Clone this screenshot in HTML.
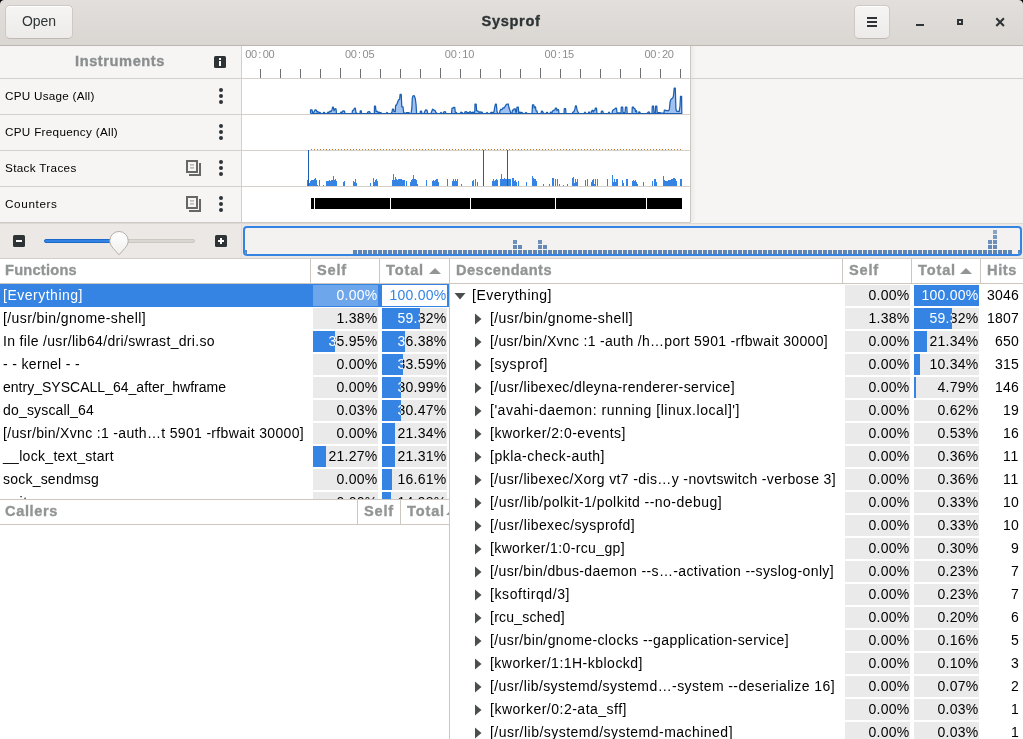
<!DOCTYPE html>
<html><head><meta charset="utf-8"><title>Sysprof</title>
<style>
*{box-sizing:border-box;margin:0;padding:0}
html,body{width:1023px;height:739px;overflow:hidden;background:#f6f5f4}
body{position:relative;font-family:'Liberation Sans', sans-serif;font-size:14px;color:#000;will-change:transform}
.abs{position:absolute}
.t{white-space:pre;display:inline-block}
#hb{left:0;top:0;width:1023px;height:46px;background:linear-gradient(#e2dfdc,#dad6d2);border-bottom:1px solid #bdb6af}
.btn{position:absolute;border:1px solid #cec9c4;border-bottom-color:#c0b9b3;border-radius:5px;background:linear-gradient(#f6f5f4,#edebe9);box-shadow:inset 0 1px #fff}
.lbl{position:absolute;white-space:pre;line-height:20px;height:20px;color:#000}
.b{font-weight:bold}
.row{font-size:11.7px}
.title,.inst,.hdr{font-size:14.6px;-webkit-text-stroke:0.35px currentColor}
.hdr{color:#929595;font-weight:bold}
.num{text-align:right}
.trough{position:absolute;background:#e9eae9;height:21px}
.fill{position:absolute;background:#3584e4;height:21px}
.vline{position:absolute;width:1px;background:#cdc7c2}
.hline{position:absolute;height:1px;background:#cdc7c2}
.clip{position:absolute;overflow:hidden;white-space:pre}
</style></head><body>

<div id="hb" class="abs"></div>
<div class="abs" style="left:0;top:0;width:4px;height:4px;background:radial-gradient(circle at 4px 4px,rgba(0,0,0,0) 3.4px,#000 4.4px)"></div>
<div class="abs" style="left:1019px;top:0;width:4px;height:4px;background:radial-gradient(circle at 0px 4px,rgba(0,0,0,0) 3.4px,#000 4.4px)"></div>
<div class="btn" style="left:5px;top:5px;width:68px;height:34px"></div>
<div class="lbl" style="left:6px;top:11px;width:66px;text-align:center;color:#2e3436"><span class="t open" style="letter-spacing:-0.062px">Open</span></div>
<div class="lbl b" style="left:411px;top:11px;width:200px;text-align:center;color:#2e3436"><span class="t title" style="letter-spacing:0.665px">Sysprof</span></div>
<div class="btn" style="left:854px;top:5px;width:36px;height:34px"></div>
<svg class="abs" style="left:855px;top:6px" width="34" height="33"><g fill="#2e3436"><rect x="12" y="11" width="10" height="2"/><rect x="12" y="15" width="10" height="2"/><rect x="12" y="19" width="10" height="2"/></g></svg>
<svg class="abs" style="left:905px;top:6px" width="118" height="33"><g fill="#2e3436"><rect x="11" y="18" width="8" height="2"/><path d="M52 13h6v6h-6z M54 15v2h2v-2z" fill-rule="evenodd"/><path d="M91.3 12.3l7.6 7.6M98.9 12.3l-7.6 7.6" stroke="#2e3436" stroke-width="2.1" fill="none"/></g></svg>
<div class="abs" style="left:242px;top:46px;width:448px;height:176px;background:#fff"></div><div class="abs" style="left:691px;top:46px;width:5px;height:176px;background:linear-gradient(to right,#eceae8,#f6f5f4)"></div>
<div class="vline" style="left:241px;top:46px;height:176px;background:#d4cfca"></div>
<div class="vline" style="left:690px;top:46px;height:176px"></div>
<div class="hline" style="left:0;top:78px;width:1023px;background:#d4cfca"></div>
<div class="hline" style="left:0;top:114px;width:691px;background:#d4cfca"></div>
<div class="hline" style="left:0;top:150px;width:691px;background:#d4cfca"></div>
<div class="hline" style="left:0;top:186px;width:691px;background:#d4cfca"></div>
<div class="lbl b" style="left:0;top:51px;width:240px;text-align:center;color:#8b8e8f"><span class="t inst" style="letter-spacing:0.588px">Instruments</span></div>
<svg class="abs" style="left:214px;top:56px" width="12" height="12"><rect width="12" height="12" rx="1.5" fill="#2e3436"/><rect x="5" y="2" width="2" height="2" fill="#fff"/><rect x="5" y="5" width="2" height="5" fill="#fff"/></svg>
<div class="lbl" style="left:5px;top:85px"><span class="t row" style="letter-spacing:0.258px">CPU Usage (All)</span></div>
<svg class="abs" style="left:218px;top:87px" width="6" height="18"><g fill="#2e3436"><circle cx="3" cy="3" r="2"/><circle cx="3" cy="9" r="2"/><circle cx="3" cy="15" r="2"/></g></svg>
<div class="lbl" style="left:5px;top:121px"><span class="t row" style="letter-spacing:0.307px">CPU Frequency (All)</span></div>
<svg class="abs" style="left:218px;top:123px" width="6" height="18"><g fill="#2e3436"><circle cx="3" cy="3" r="2"/><circle cx="3" cy="9" r="2"/><circle cx="3" cy="15" r="2"/></g></svg>
<div class="lbl" style="left:5px;top:157px"><span class="t row" style="letter-spacing:0.336px">Stack Traces</span></div>
<svg class="abs" style="left:218px;top:159px" width="6" height="18"><g fill="#2e3436"><circle cx="3" cy="3" r="2"/><circle cx="3" cy="9" r="2"/><circle cx="3" cy="15" r="2"/></g></svg>
<svg class="abs" style="left:186px;top:160px" width="16" height="17"><g fill="#666868"><path d="M0 0h12v13h-12z M2 2v9h8v-9z" fill-rule="evenodd"/><path d="M13 3h2v13h-12v-2h10z"/></g><g fill="#bcbcbb"><rect x="4" y="4" width="4" height="1.7"/><rect x="4" y="7" width="4" height="1.7"/></g></svg>
<div class="lbl" style="left:5px;top:193px"><span class="t row" style="letter-spacing:0.645px">Counters</span></div>
<svg class="abs" style="left:218px;top:195px" width="6" height="18"><g fill="#2e3436"><circle cx="3" cy="3" r="2"/><circle cx="3" cy="9" r="2"/><circle cx="3" cy="15" r="2"/></g></svg>
<svg class="abs" style="left:186px;top:196px" width="16" height="17"><g fill="#666868"><path d="M0 0h12v13h-12z M2 2v9h8v-9z" fill-rule="evenodd"/><path d="M13 3h2v13h-12v-2h10z"/></g><g fill="#bcbcbb"><rect x="4" y="4" width="4" height="1.7"/><rect x="4" y="7" width="4" height="1.7"/></g></svg>
<div class="abs" style="left:242px;top:46px;width:447px;height:32px;overflow:hidden;font-size:11px;color:#8c8e8d">
<div class="abs" style="left:3.2px;top:2px;line-height:12px;white-space:nowrap"><span style="display:inline-block;width:5.85px;text-align:center">0</span><span style="display:inline-block;width:5.85px;text-align:center">0</span><span style="display:inline-block;width:5.85px;text-align:center">:</span><span style="display:inline-block;width:5.85px;text-align:center">0</span><span style="display:inline-block;width:5.85px;text-align:center">0</span></div>
<div class="abs" style="left:103.0px;top:2px;line-height:12px;white-space:nowrap"><span style="display:inline-block;width:5.85px;text-align:center">0</span><span style="display:inline-block;width:5.85px;text-align:center">0</span><span style="display:inline-block;width:5.85px;text-align:center">:</span><span style="display:inline-block;width:5.85px;text-align:center">0</span><span style="display:inline-block;width:5.85px;text-align:center">5</span></div>
<div class="abs" style="left:202.8px;top:2px;line-height:12px;white-space:nowrap"><span style="display:inline-block;width:5.85px;text-align:center">0</span><span style="display:inline-block;width:5.85px;text-align:center">0</span><span style="display:inline-block;width:5.85px;text-align:center">:</span><span style="display:inline-block;width:5.85px;text-align:center">1</span><span style="display:inline-block;width:5.85px;text-align:center">0</span></div>
<div class="abs" style="left:302.6px;top:2px;line-height:12px;white-space:nowrap"><span style="display:inline-block;width:5.85px;text-align:center">0</span><span style="display:inline-block;width:5.85px;text-align:center">0</span><span style="display:inline-block;width:5.85px;text-align:center">:</span><span style="display:inline-block;width:5.85px;text-align:center">1</span><span style="display:inline-block;width:5.85px;text-align:center">5</span></div>
<div class="abs" style="left:402.4px;top:2px;line-height:12px;white-space:nowrap"><span style="display:inline-block;width:5.85px;text-align:center">0</span><span style="display:inline-block;width:5.85px;text-align:center">0</span><span style="display:inline-block;width:5.85px;text-align:center">:</span><span style="display:inline-block;width:5.85px;text-align:center">2</span><span style="display:inline-block;width:5.85px;text-align:center">0</span></div>
<div class="abs" style="left:18px;top:23px;width:1px;height:9px;background:#6d7070"></div>
<div class="abs" style="left:38px;top:23px;width:1px;height:9px;background:#6d7070"></div>
<div class="abs" style="left:58px;top:23px;width:1px;height:9px;background:#6d7070"></div>
<div class="abs" style="left:78px;top:23px;width:1px;height:9px;background:#6d7070"></div>
<div class="abs" style="left:98px;top:22px;width:1px;height:10px;background:#6d7070"></div>
<div class="abs" style="left:118px;top:23px;width:1px;height:9px;background:#6d7070"></div>
<div class="abs" style="left:138px;top:23px;width:1px;height:9px;background:#6d7070"></div>
<div class="abs" style="left:158px;top:23px;width:1px;height:9px;background:#6d7070"></div>
<div class="abs" style="left:178px;top:23px;width:1px;height:9px;background:#6d7070"></div>
<div class="abs" style="left:198px;top:22px;width:1px;height:10px;background:#6d7070"></div>
<div class="abs" style="left:218px;top:23px;width:1px;height:9px;background:#6d7070"></div>
<div class="abs" style="left:238px;top:23px;width:1px;height:9px;background:#6d7070"></div>
<div class="abs" style="left:258px;top:23px;width:1px;height:9px;background:#6d7070"></div>
<div class="abs" style="left:278px;top:23px;width:1px;height:9px;background:#6d7070"></div>
<div class="abs" style="left:298px;top:22px;width:1px;height:10px;background:#6d7070"></div>
<div class="abs" style="left:318px;top:23px;width:1px;height:9px;background:#6d7070"></div>
<div class="abs" style="left:338px;top:23px;width:1px;height:9px;background:#6d7070"></div>
<div class="abs" style="left:358px;top:23px;width:1px;height:9px;background:#6d7070"></div>
<div class="abs" style="left:378px;top:23px;width:1px;height:9px;background:#6d7070"></div>
<div class="abs" style="left:398px;top:22px;width:1px;height:10px;background:#6d7070"></div>
<div class="abs" style="left:418px;top:23px;width:1px;height:9px;background:#6d7070"></div>
<div class="abs" style="left:438px;top:23px;width:1px;height:9px;background:#6d7070"></div>
</div>
<svg class="abs" style="left:242px;top:78px" width="447" height="36"><polygon points="68.5,35.5 68.5,31.9 70.0,31.9 70.5,34.5 72.0,34.1 73.0,31.9 74.5,32.2 75.0,34.1 76.0,33.6 77.0,34.5 78.0,34.4 79.0,35.5 81.0,35.5 81.5,34.4 82.5,34.4 83.0,35.5 85.0,35.5 86.0,34.1 87.0,34.5 88.0,33.1 89.0,33.6 90.0,31.7 90.7,29.0 91.3,29.0 92.0,32.6 93.0,30.7 94.0,30.9 94.5,35.5 98.0,35.5 99.0,34.1 100.0,34.4 101.0,32.8 102.5,33.1 103.0,35.5 110.0,35.5 110.5,32.6 111.5,32.2 112.5,30.2 113.3,30.2 114.0,34.5 115.0,35.5 118.0,35.5 118.3,32.9 119.3,32.9 119.6,35.5 125.0,35.5 126.0,33.8 127.5,33.6 128.5,35.5 132.3,35.5 132.5,28.2 133.5,28.2 134.0,33.6 135.0,33.2 136.0,34.4 137.0,34.1 138.0,34.7 139.0,34.5 139.5,35.5 144.0,35.5 145.0,34.4 146.0,35.5 149.0,35.5 150.0,34.1 150.5,31.2 151.5,31.2 152.0,33.6 153.3,33.6 153.6,27.4 154.6,26.9 155.3,25.0 156.5,22.1 157.6,21.2 158.1,16.4 159.2,16.4 159.8,28.8 161.0,28.8 161.7,34.7 164.0,35.5 164.5,34.5 167.0,34.5 167.5,35.5 169.0,35.5 169.8,30.7 170.3,20.2 171.0,17.9 172.2,17.7 173.2,20.2 174.0,26.0 174.6,35.5 178.0,35.5 178.5,33.1 179.5,33.1 180.0,35.5 182.0,35.5 183.0,33.1 184.0,31.7 185.0,32.2 185.7,35.5 189.0,35.5 190.0,32.6 190.8,31.1 192.0,32.2 193.0,32.6 194.0,34.5 195.0,35.5 198.0,35.5 199.0,34.5 200.0,35.5 201.0,35.5 202.0,33.8 203.3,33.6 204.0,35.5 209.5,35.5 210.0,30.2 211.3,30.2 211.6,29.3 212.8,29.3 213.2,34.1 214.5,34.5 215.0,35.5 218.0,35.5 219.0,34.1 220.0,34.5 221.0,35.5 222.5,35.5 223.0,33.8 224.5,33.6 225.0,34.5 227.0,34.5 228.0,33.6 229.0,34.4 230.0,34.5 231.0,34.1 232.0,34.5 232.8,34.1 233.0,26.0 234.2,26.0 234.6,32.6 236.0,33.1 237.0,34.5 238.0,33.6 239.0,34.5 240.0,34.0 241.0,35.5 244.0,35.5 245.0,34.4 246.0,35.5 248.0,35.5 249.0,34.4 250.5,34.4 251.0,35.1 252.0,33.6 252.8,28.8 253.5,26.0 254.3,26.0 255.0,33.6 256.0,35.5 257.5,35.5 258.0,32.6 259.0,31.2 260.0,31.7 261.0,29.8 262.0,30.2 263.0,28.6 264.0,26.9 265.0,26.1 266.2,26.0 267.0,29.8 268.0,32.6 269.0,35.5 270.0,35.5 270.5,32.2 271.5,32.2 272.0,30.9 273.3,30.9 273.7,34.1 274.5,34.1 275.0,29.0 276.3,29.0 276.7,34.5 278.0,34.1 279.0,34.7 280.0,34.4 281.0,35.5 283.0,35.5 284.0,34.4 285.0,35.5 290.0,35.5 290.5,26.9 291.8,26.9 292.2,29.8 293.5,28.8 294.0,32.6 295.0,33.1 295.5,35.5 299.0,35.5 299.5,33.1 300.5,33.1 301.0,34.5 302.0,35.5 304.0,35.5 304.5,34.4 305.5,34.4 306.0,35.5 308.0,35.5 308.5,34.1 309.5,34.1 310.0,34.5 311.0,32.6 312.0,32.2 313.0,31.7 313.5,30.0 314.5,30.0 315.0,32.6 315.5,31.5 316.5,31.5 317.0,35.5 322.0,35.5 322.3,30.7 323.6,30.7 324.0,35.5 330.0,35.5 331.0,34.1 332.0,33.6 333.0,30.7 333.5,27.9 334.3,27.9 335.0,31.7 336.0,34.1 337.0,35.5 342.0,35.5 343.0,34.1 344.0,35.5 346.0,35.5 347.0,33.8 348.0,35.5 349.0,35.5 349.5,33.1 350.5,32.2 351.3,34.1 352.0,32.6 353.0,32.1 353.3,30.2 354.5,30.2 355.0,35.5 359.0,35.5 359.5,33.1 360.8,33.1 361.2,34.9 362.0,35.5 366.0,35.5 367.0,34.1 368.0,35.5 370.0,35.5 370.5,32.6 371.5,31.7 372.5,31.2 373.5,30.2 374.5,30.2 375.0,34.7 379.0,35.0 379.3,29.0 380.7,29.0 381.0,34.5 383.0,34.5 383.5,29.0 384.8,29.0 385.2,35.5 390.0,35.5 390.3,29.0 391.5,29.0 392.0,30.7 393.0,30.7 393.5,33.6 394.5,32.6 395.0,35.5 396.5,35.5 397.0,33.8 398.0,34.4 398.5,35.5 405.0,35.5 406.0,34.4 407.0,33.8 408.0,35.5 410.0,35.5 410.3,28.2 411.5,28.2 412.0,34.9 413.3,34.9 413.6,28.2 414.8,28.2 415.2,34.5 418.0,34.5 418.5,35.0 422.0,35.0 422.3,32.2 423.5,32.2 424.0,32.6 426.6,32.6 427.4,31.2 428.0,24.5 428.8,21.7 429.6,20.7 430.6,20.2 431.4,18.3 432.2,10.2 433.3,10.2 433.9,30.7 434.5,33.1 437.2,33.6 438.0,27.9 438.5,18.3 439.6,18.3 439.8,35.5" fill="#9fc2f0"/><polyline points="68.5,35.5 68.5,31.9 70.0,31.9 70.5,34.5 72.0,34.1 73.0,31.9 74.5,32.2 75.0,34.1 76.0,33.6 77.0,34.5 78.0,34.4 79.0,35.5 81.0,35.5 81.5,34.4 82.5,34.4 83.0,35.5 85.0,35.5 86.0,34.1 87.0,34.5 88.0,33.1 89.0,33.6 90.0,31.7 90.7,29.0 91.3,29.0 92.0,32.6 93.0,30.7 94.0,30.9 94.5,35.5 98.0,35.5 99.0,34.1 100.0,34.4 101.0,32.8 102.5,33.1 103.0,35.5 110.0,35.5 110.5,32.6 111.5,32.2 112.5,30.2 113.3,30.2 114.0,34.5 115.0,35.5 118.0,35.5 118.3,32.9 119.3,32.9 119.6,35.5 125.0,35.5 126.0,33.8 127.5,33.6 128.5,35.5 132.3,35.5 132.5,28.2 133.5,28.2 134.0,33.6 135.0,33.2 136.0,34.4 137.0,34.1 138.0,34.7 139.0,34.5 139.5,35.5 144.0,35.5 145.0,34.4 146.0,35.5 149.0,35.5 150.0,34.1 150.5,31.2 151.5,31.2 152.0,33.6 153.3,33.6 153.6,27.4 154.6,26.9 155.3,25.0 156.5,22.1 157.6,21.2 158.1,16.4 159.2,16.4 159.8,28.8 161.0,28.8 161.7,34.7 164.0,35.5 164.5,34.5 167.0,34.5 167.5,35.5 169.0,35.5 169.8,30.7 170.3,20.2 171.0,17.9 172.2,17.7 173.2,20.2 174.0,26.0 174.6,35.5 178.0,35.5 178.5,33.1 179.5,33.1 180.0,35.5 182.0,35.5 183.0,33.1 184.0,31.7 185.0,32.2 185.7,35.5 189.0,35.5 190.0,32.6 190.8,31.1 192.0,32.2 193.0,32.6 194.0,34.5 195.0,35.5 198.0,35.5 199.0,34.5 200.0,35.5 201.0,35.5 202.0,33.8 203.3,33.6 204.0,35.5 209.5,35.5 210.0,30.2 211.3,30.2 211.6,29.3 212.8,29.3 213.2,34.1 214.5,34.5 215.0,35.5 218.0,35.5 219.0,34.1 220.0,34.5 221.0,35.5 222.5,35.5 223.0,33.8 224.5,33.6 225.0,34.5 227.0,34.5 228.0,33.6 229.0,34.4 230.0,34.5 231.0,34.1 232.0,34.5 232.8,34.1 233.0,26.0 234.2,26.0 234.6,32.6 236.0,33.1 237.0,34.5 238.0,33.6 239.0,34.5 240.0,34.0 241.0,35.5 244.0,35.5 245.0,34.4 246.0,35.5 248.0,35.5 249.0,34.4 250.5,34.4 251.0,35.1 252.0,33.6 252.8,28.8 253.5,26.0 254.3,26.0 255.0,33.6 256.0,35.5 257.5,35.5 258.0,32.6 259.0,31.2 260.0,31.7 261.0,29.8 262.0,30.2 263.0,28.6 264.0,26.9 265.0,26.1 266.2,26.0 267.0,29.8 268.0,32.6 269.0,35.5 270.0,35.5 270.5,32.2 271.5,32.2 272.0,30.9 273.3,30.9 273.7,34.1 274.5,34.1 275.0,29.0 276.3,29.0 276.7,34.5 278.0,34.1 279.0,34.7 280.0,34.4 281.0,35.5 283.0,35.5 284.0,34.4 285.0,35.5 290.0,35.5 290.5,26.9 291.8,26.9 292.2,29.8 293.5,28.8 294.0,32.6 295.0,33.1 295.5,35.5 299.0,35.5 299.5,33.1 300.5,33.1 301.0,34.5 302.0,35.5 304.0,35.5 304.5,34.4 305.5,34.4 306.0,35.5 308.0,35.5 308.5,34.1 309.5,34.1 310.0,34.5 311.0,32.6 312.0,32.2 313.0,31.7 313.5,30.0 314.5,30.0 315.0,32.6 315.5,31.5 316.5,31.5 317.0,35.5 322.0,35.5 322.3,30.7 323.6,30.7 324.0,35.5 330.0,35.5 331.0,34.1 332.0,33.6 333.0,30.7 333.5,27.9 334.3,27.9 335.0,31.7 336.0,34.1 337.0,35.5 342.0,35.5 343.0,34.1 344.0,35.5 346.0,35.5 347.0,33.8 348.0,35.5 349.0,35.5 349.5,33.1 350.5,32.2 351.3,34.1 352.0,32.6 353.0,32.1 353.3,30.2 354.5,30.2 355.0,35.5 359.0,35.5 359.5,33.1 360.8,33.1 361.2,34.9 362.0,35.5 366.0,35.5 367.0,34.1 368.0,35.5 370.0,35.5 370.5,32.6 371.5,31.7 372.5,31.2 373.5,30.2 374.5,30.2 375.0,34.7 379.0,35.0 379.3,29.0 380.7,29.0 381.0,34.5 383.0,34.5 383.5,29.0 384.8,29.0 385.2,35.5 390.0,35.5 390.3,29.0 391.5,29.0 392.0,30.7 393.0,30.7 393.5,33.6 394.5,32.6 395.0,35.5 396.5,35.5 397.0,33.8 398.0,34.4 398.5,35.5 405.0,35.5 406.0,34.4 407.0,33.8 408.0,35.5 410.0,35.5 410.3,28.2 411.5,28.2 412.0,34.9 413.3,34.9 413.6,28.2 414.8,28.2 415.2,34.5 418.0,34.5 418.5,35.0 422.0,35.0 422.3,32.2 423.5,32.2 424.0,32.6 426.6,32.6 427.4,31.2 428.0,24.5 428.8,21.7 429.6,20.7 430.6,20.2 431.4,18.3 432.2,10.2 433.3,10.2 433.9,30.7 434.5,33.1 437.2,33.6 438.0,27.9 438.5,18.3 439.6,18.3 439.8,35.5 439.8,35.5 68.5,35.5" fill="none" stroke="#1a5fb4" stroke-width="1.25" stroke-linejoin="round"/></svg>
<svg class="abs" style="left:242px;top:114px" width="447" height="36"><line x1="69" y1="35.5" x2="441" y2="35.5" stroke="#c6792a" stroke-width="1" stroke-dasharray="1 2"/></svg>
<svg class="abs" style="left:242px;top:150px" width="447" height="36" shape-rendering="crispEdges"><g fill="#3584e4"><rect x="65" y="30" width="1" height="6"/><rect x="67" y="33" width="1" height="3"/><rect x="68" y="31" width="1" height="5"/><rect x="69" y="30" width="1" height="6"/><rect x="70" y="30" width="1" height="6"/><rect x="71" y="30" width="1" height="6"/><rect x="72" y="29" width="1" height="7"/><rect x="73" y="28" width="1" height="8"/><rect x="74" y="30" width="1" height="6"/><rect x="75" y="35" width="1" height="1"/><rect x="77" y="30" width="1" height="6"/><rect x="81" y="35" width="1" height="1"/><rect x="84" y="31" width="1" height="5"/><rect x="85" y="31" width="1" height="5"/><rect x="86" y="31" width="1" height="5"/><rect x="87" y="30" width="1" height="6"/><rect x="88" y="31" width="1" height="5"/><rect x="89" y="30" width="1" height="6"/><rect x="90" y="30" width="1" height="6"/><rect x="91" y="26" width="1" height="10"/><rect x="92" y="30" width="1" height="6"/><rect x="93" y="29" width="1" height="7"/><rect x="94" y="31" width="1" height="5"/><rect x="101" y="32" width="1" height="4"/><rect x="102" y="31" width="1" height="5"/><rect x="111" y="31" width="1" height="5"/><rect x="112" y="32" width="1" height="4"/><rect x="113" y="29" width="1" height="7"/><rect x="114" y="33" width="1" height="3"/><rect x="128" y="33" width="1" height="3"/><rect x="131" y="28" width="1" height="8"/><rect x="132" y="32" width="1" height="4"/><rect x="133" y="30" width="1" height="6"/><rect x="134" y="29" width="1" height="7"/><rect x="135" y="31" width="1" height="5"/><rect x="150" y="30" width="1" height="6"/><rect x="151" y="24" width="1" height="12"/><rect x="152" y="30" width="1" height="6"/><rect x="153" y="27" width="1" height="9"/><rect x="154" y="29" width="1" height="7"/><rect x="155" y="30" width="1" height="6"/><rect x="156" y="29" width="1" height="7"/><rect x="157" y="29" width="1" height="7"/><rect x="158" y="29" width="1" height="7"/><rect x="159" y="29" width="1" height="7"/><rect x="160" y="30" width="1" height="6"/><rect x="161" y="30" width="1" height="6"/><rect x="162" y="30" width="1" height="6"/><rect x="164" y="31" width="1" height="5"/><rect x="168" y="32" width="1" height="4"/><rect x="169" y="30" width="1" height="6"/><rect x="170" y="29" width="1" height="7"/><rect x="171" y="25" width="1" height="11"/><rect x="172" y="29" width="1" height="7"/><rect x="173" y="29" width="1" height="7"/><rect x="174" y="30" width="1" height="6"/><rect x="175" y="34" width="1" height="2"/><rect x="184" y="30" width="1" height="6"/><rect x="190" y="31" width="1" height="5"/><rect x="191" y="30" width="1" height="6"/><rect x="192" y="31" width="1" height="5"/><rect x="193" y="30" width="1" height="6"/><rect x="194" y="29" width="1" height="7"/><rect x="195" y="29" width="1" height="7"/><rect x="196" y="32" width="1" height="4"/><rect x="205" y="29" width="1" height="7"/><rect x="210" y="31" width="1" height="5"/><rect x="211" y="29" width="1" height="7"/><rect x="212" y="31" width="1" height="5"/><rect x="213" y="29" width="1" height="7"/><rect x="214" y="31" width="1" height="5"/><rect x="215" y="29" width="1" height="7"/><rect x="219" y="34" width="1" height="2"/><rect x="230" y="31" width="1" height="5"/><rect x="231" y="30" width="1" height="6"/><rect x="233" y="29" width="1" height="7"/><rect x="235" y="32" width="1" height="4"/><rect x="250" y="31" width="1" height="5"/><rect x="251" y="29" width="1" height="7"/><rect x="252" y="31" width="1" height="5"/><rect x="253" y="30" width="1" height="6"/><rect x="254" y="29" width="1" height="7"/><rect x="255" y="30" width="1" height="6"/><rect x="258" y="29" width="1" height="7"/><rect x="259" y="24" width="1" height="12"/><rect x="260" y="29" width="1" height="7"/><rect x="261" y="29" width="1" height="7"/><rect x="262" y="28" width="1" height="8"/><rect x="263" y="29" width="1" height="7"/><rect x="264" y="29" width="1" height="7"/><rect x="266" y="29" width="1" height="7"/><rect x="267" y="29" width="1" height="7"/><rect x="268" y="29" width="1" height="7"/><rect x="270" y="28" width="1" height="8"/><rect x="271" y="28" width="1" height="8"/><rect x="272" y="31" width="1" height="5"/><rect x="273" y="30" width="1" height="6"/><rect x="274" y="32" width="1" height="4"/><rect x="276" y="31" width="1" height="5"/><rect x="284" y="32" width="1" height="4"/><rect x="290" y="26" width="1" height="10"/><rect x="291" y="28" width="1" height="8"/><rect x="292" y="29" width="1" height="7"/><rect x="293" y="29" width="1" height="7"/><rect x="294" y="31" width="1" height="5"/><rect x="301" y="34" width="1" height="2"/><rect x="307" y="34" width="1" height="2"/><rect x="310" y="28" width="1" height="8"/><rect x="311" y="28" width="1" height="8"/><rect x="313" y="29" width="1" height="7"/><rect x="315" y="29" width="1" height="7"/><rect x="317" y="34" width="1" height="2"/><rect x="321" y="35" width="1" height="1"/><rect x="325" y="34" width="1" height="2"/><rect x="330" y="28" width="1" height="8"/><rect x="331" y="27" width="1" height="9"/><rect x="332" y="33" width="1" height="3"/><rect x="333" y="29" width="1" height="7"/><rect x="334" y="32" width="1" height="4"/><rect x="335" y="29" width="1" height="7"/><rect x="343" y="30" width="1" height="6"/><rect x="345" y="29" width="1" height="7"/><rect x="349" y="32" width="1" height="4"/><rect x="350" y="30" width="1" height="6"/><rect x="351" y="29" width="1" height="7"/><rect x="352" y="34" width="1" height="2"/><rect x="353" y="29" width="1" height="7"/><rect x="355" y="29" width="1" height="7"/><rect x="365" y="29" width="1" height="7"/><rect x="370" y="25" width="1" height="11"/><rect x="371" y="32" width="1" height="4"/><rect x="372" y="29" width="1" height="7"/><rect x="373" y="32" width="1" height="4"/><rect x="374" y="29" width="1" height="7"/><rect x="375" y="29" width="1" height="7"/><rect x="380" y="30" width="1" height="6"/><rect x="381" y="33" width="1" height="3"/><rect x="384" y="29" width="1" height="7"/><rect x="385" y="29" width="1" height="7"/><rect x="390" y="31" width="1" height="5"/><rect x="391" y="30" width="1" height="6"/><rect x="392" y="31" width="1" height="5"/><rect x="393" y="30" width="1" height="6"/><rect x="394" y="32" width="1" height="4"/><rect x="395" y="34" width="1" height="2"/><rect x="401" y="32" width="1" height="4"/><rect x="410" y="31" width="1" height="5"/><rect x="412" y="29" width="1" height="7"/><rect x="413" y="29" width="1" height="7"/><rect x="414" y="32" width="1" height="4"/><rect x="421" y="26" width="1" height="10"/><rect x="422" y="30" width="1" height="6"/><rect x="423" y="31" width="1" height="5"/><rect x="424" y="31" width="1" height="5"/><rect x="425" y="31" width="1" height="5"/><rect x="426" y="30" width="1" height="6"/><rect x="427" y="30" width="1" height="6"/><rect x="428" y="30" width="1" height="6"/><rect x="429" y="29" width="1" height="7"/><rect x="430" y="29" width="1" height="7"/><rect x="431" y="28" width="1" height="8"/><rect x="432" y="28" width="1" height="8"/><rect x="433" y="29" width="1" height="7"/><rect x="434" y="31" width="1" height="5"/><rect x="438" y="29" width="1" height="7"/><rect x="439" y="29" width="1" height="7"/></g><g fill="#1a5fb4"><rect x="66" y="0" width="1" height="36"/><rect x="241" y="0" width="1" height="36"/><rect x="265" y="0" width="1" height="36"/></g></svg>
<svg class="abs" style="left:242px;top:186px" width="447" height="36" shape-rendering="crispEdges"><g fill="#000"><rect x="69" y="12" width="3" height="11"/><rect x="73" y="12" width="75" height="11"/><rect x="149" y="12" width="79" height="11"/><rect x="229" y="12" width="84" height="11"/><rect x="314" y="12" width="90" height="11"/><rect x="405" y="12" width="35" height="11"/></g></svg>
<div class="abs" style="left:0;top:222px;width:691px;height:1px;background:#d0cbc6"></div><div class="abs" style="left:0;top:223px;width:1023px;height:36px;background:#ebe8e5;border-top:1px solid #dcd8d4;border-bottom:1px solid #d2cdc8"></div><div class="abs" style="left:241px;top:223px;width:1px;height:35px;background:#e0dcd8"></div>
<svg class="abs" style="left:13px;top:235px" width="12" height="12"><rect width="12" height="12" rx="1.5" fill="#2e3436"/><rect x="3" y="5" width="6" height="2" fill="#fff"/></svg>
<svg class="abs" style="left:215px;top:235px" width="12" height="12"><rect width="12" height="12" rx="1.5" fill="#2e3436"/><rect x="3" y="5" width="6" height="2" fill="#fff"/><rect x="5" y="3" width="2" height="6" fill="#fff"/></svg>
<div class="abs" style="left:44px;top:239px;width:151px;height:4px;border-radius:2px;background:#dad6d2;border:1px solid #cdc7c2"></div>
<div class="abs" style="left:44px;top:239px;width:75px;height:4px;border-radius:2px;background:#3584e4;border:1px solid #1b6acb"></div>
<svg class="abs" style="left:107px;top:229px" width="24" height="28"><defs><linearGradient id="kg" x1="0" y1="0" x2="0" y2="1"><stop offset="0" stop-color="#fff"/><stop offset="1" stop-color="#f0efee"/></linearGradient></defs><path d="M12 2.5a9.2 9.2 0 0 1 9.2 9.2c0 3.4-1.6 5.6-3.6 7.9l-5.6 6.2-5.6-6.2c-2-2.3-3.6-4.5-3.6-7.9a9.2 9.2 0 0 1 9.2-9.2z" fill="url(#kg)" stroke="#b6b0aa" stroke-width="1"/></svg>
<div class="abs" style="left:243px;top:226px;width:779px;height:30px;border:2px solid #3584e4;border-radius:4px;background:#f3f2f1;overflow:hidden">
<svg class="abs" style="left:0;top:0" width="778" height="30" shape-rendering="crispEdges"><g fill="#5f85b5"><rect x="0" y="22" width="2" height="4"/><rect x="773" y="22" width="2" height="4"/><rect x="108" y="22" width="4" height="4"/><rect x="113" y="22" width="4" height="4"/><rect x="118" y="22" width="4" height="4"/><rect x="123" y="22" width="4" height="4"/><rect x="128" y="22" width="4" height="4"/><rect x="133" y="22" width="4" height="4"/><rect x="138" y="22" width="4" height="4"/><rect x="143" y="22" width="4" height="4"/><rect x="148" y="22" width="4" height="4"/><rect x="153" y="22" width="4" height="4"/><rect x="158" y="22" width="4" height="4"/><rect x="163" y="22" width="4" height="4"/><rect x="168" y="22" width="4" height="4"/><rect x="173" y="22" width="4" height="4"/><rect x="178" y="22" width="4" height="4"/><rect x="183" y="22" width="4" height="4"/><rect x="188" y="22" width="4" height="4"/><rect x="193" y="22" width="4" height="4"/><rect x="198" y="22" width="4" height="4"/><rect x="203" y="22" width="4" height="4"/><rect x="208" y="22" width="4" height="4"/><rect x="213" y="22" width="4" height="4"/><rect x="218" y="22" width="4" height="4"/><rect x="223" y="22" width="4" height="4"/><rect x="228" y="22" width="4" height="4"/><rect x="233" y="22" width="4" height="4"/><rect x="238" y="22" width="4" height="4"/><rect x="243" y="22" width="4" height="4"/><rect x="248" y="22" width="4" height="4"/><rect x="253" y="22" width="4" height="4"/><rect x="258" y="22" width="4" height="4"/><rect x="263" y="22" width="4" height="4"/><rect x="268" y="22" width="4" height="4"/><rect x="273" y="22" width="4" height="4"/><rect x="278" y="22" width="4" height="4"/><rect x="283" y="22" width="4" height="4"/><rect x="288" y="22" width="4" height="4"/><rect x="293" y="22" width="4" height="4"/><rect x="298" y="22" width="4" height="4"/><rect x="303" y="22" width="4" height="4"/><rect x="308" y="22" width="4" height="4"/><rect x="313" y="22" width="4" height="4"/><rect x="318" y="22" width="4" height="4"/><rect x="323" y="22" width="4" height="4"/><rect x="328" y="22" width="4" height="4"/><rect x="333" y="22" width="4" height="4"/><rect x="338" y="22" width="4" height="4"/><rect x="343" y="22" width="4" height="4"/><rect x="348" y="22" width="4" height="4"/><rect x="353" y="22" width="4" height="4"/><rect x="358" y="22" width="4" height="4"/><rect x="363" y="22" width="4" height="4"/><rect x="368" y="22" width="4" height="4"/><rect x="373" y="22" width="4" height="4"/><rect x="378" y="22" width="4" height="4"/><rect x="383" y="22" width="4" height="4"/><rect x="388" y="22" width="4" height="4"/><rect x="393" y="22" width="4" height="4"/><rect x="398" y="22" width="4" height="4"/><rect x="403" y="22" width="4" height="4"/><rect x="408" y="22" width="4" height="4"/><rect x="413" y="22" width="4" height="4"/><rect x="418" y="22" width="4" height="4"/><rect x="423" y="22" width="4" height="4"/><rect x="428" y="22" width="4" height="4"/><rect x="433" y="22" width="4" height="4"/><rect x="438" y="22" width="4" height="4"/><rect x="443" y="22" width="4" height="4"/><rect x="448" y="22" width="4" height="4"/><rect x="453" y="22" width="4" height="4"/><rect x="458" y="22" width="4" height="4"/><rect x="463" y="22" width="4" height="4"/><rect x="468" y="22" width="4" height="4"/><rect x="473" y="22" width="4" height="4"/><rect x="478" y="22" width="4" height="4"/><rect x="483" y="22" width="4" height="4"/><rect x="488" y="22" width="4" height="4"/><rect x="493" y="22" width="4" height="4"/><rect x="498" y="22" width="4" height="4"/><rect x="503" y="22" width="4" height="4"/><rect x="508" y="22" width="4" height="4"/><rect x="513" y="22" width="4" height="4"/><rect x="518" y="22" width="4" height="4"/><rect x="523" y="22" width="4" height="4"/><rect x="528" y="22" width="4" height="4"/><rect x="533" y="22" width="4" height="4"/><rect x="538" y="22" width="4" height="4"/><rect x="543" y="22" width="4" height="4"/><rect x="548" y="22" width="4" height="4"/><rect x="553" y="22" width="4" height="4"/><rect x="558" y="22" width="4" height="4"/><rect x="563" y="22" width="4" height="4"/><rect x="568" y="22" width="4" height="4"/><rect x="573" y="22" width="4" height="4"/><rect x="578" y="22" width="4" height="4"/><rect x="583" y="22" width="4" height="4"/><rect x="588" y="22" width="4" height="4"/><rect x="593" y="22" width="4" height="4"/><rect x="598" y="22" width="4" height="4"/><rect x="603" y="22" width="4" height="4"/><rect x="608" y="22" width="4" height="4"/><rect x="613" y="22" width="4" height="4"/><rect x="618" y="22" width="4" height="4"/><rect x="623" y="22" width="4" height="4"/><rect x="628" y="22" width="4" height="4"/><rect x="633" y="22" width="4" height="4"/><rect x="638" y="22" width="4" height="4"/><rect x="643" y="22" width="4" height="4"/><rect x="648" y="22" width="4" height="4"/><rect x="653" y="22" width="4" height="4"/><rect x="658" y="22" width="4" height="4"/><rect x="663" y="22" width="4" height="4"/><rect x="668" y="22" width="4" height="4"/><rect x="673" y="22" width="4" height="4"/><rect x="678" y="22" width="4" height="4"/><rect x="683" y="22" width="4" height="4"/><rect x="688" y="22" width="4" height="4"/><rect x="693" y="22" width="4" height="4"/><rect x="698" y="22" width="4" height="4"/><rect x="703" y="22" width="4" height="4"/><rect x="708" y="22" width="4" height="4"/><rect x="713" y="22" width="4" height="4"/><rect x="718" y="22" width="4" height="4"/><rect x="723" y="22" width="4" height="4"/><rect x="728" y="22" width="4" height="4"/><rect x="733" y="22" width="4" height="4"/><rect x="738" y="22" width="4" height="4"/><rect x="743" y="22" width="4" height="4"/><rect x="748" y="22" width="4" height="4"/><rect x="753" y="22" width="4" height="4"/><rect x="758" y="22" width="4" height="4"/><rect x="763" y="22" width="4" height="4"/><rect x="268" y="12" width="4" height="4" opacity="0.9"/><rect x="268" y="17" width="4" height="4" opacity="0.96"/><rect x="273" y="17" width="4" height="4" opacity="0.96"/><rect x="293" y="12" width="4" height="4" opacity="0.9"/><rect x="293" y="17" width="4" height="4" opacity="0.96"/><rect x="298" y="17" width="4" height="4" opacity="0.96"/><rect x="743" y="17" width="4" height="4" opacity="0.96"/><rect x="748" y="17" width="4" height="4" opacity="0.96"/><rect x="743" y="12" width="4" height="4" opacity="0.9"/><rect x="748" y="12" width="4" height="4" opacity="0.9"/><rect x="748" y="7" width="4" height="4" opacity="0.82"/><rect x="748" y="2" width="4" height="4" opacity="0.72"/></g></svg>
</div>
<div class="abs" style="left:0;top:259px;width:1023px;height:480px;background:#fff"></div>
<div class="hline" style="left:0;top:283px;width:1023px"></div>
<div class="vline" style="left:449px;top:259px;height:480px"></div>
<div class="vline" style="left:310px;top:259px;height:24px"></div>
<div class="vline" style="left:379px;top:259px;height:24px"></div>
<div class="lbl hdr" style="left:5px;top:260px"><span class="t hdr" style="letter-spacing:0.252px">Functions</span></div>
<div class="lbl hdr" style="left:317px;top:260px"><span class="t hdr" style="letter-spacing:0.809px">Self</span></div>
<div class="lbl hdr" style="left:386px;top:260px"><span class="t hdr" style="letter-spacing:0.844px">Total</span></div>
<svg class="abs" style="left:429px;top:268px" width="12" height="6"><path d="M0 6l6-6 6 6z" fill="#929595"/></svg>
<div class="vline" style="left:842px;top:259px;height:24px"></div>
<div class="vline" style="left:911px;top:259px;height:24px"></div>
<div class="vline" style="left:980px;top:259px;height:24px"></div>
<div class="lbl hdr" style="left:456px;top:260px"><span class="t hdr" style="letter-spacing:0.469px">Descendants</span></div>
<div class="lbl hdr" style="left:849px;top:260px"><span class="t hdr" style="letter-spacing:0.809px">Self</span></div>
<div class="lbl hdr" style="left:918px;top:260px"><span class="t hdr" style="letter-spacing:0.844px">Total</span></div>
<div class="lbl hdr" style="left:987px;top:260px"><span class="t hdr" style="letter-spacing:0.605px">Hits</span></div>
<svg class="abs" style="left:960px;top:268px" width="12" height="6"><path d="M0 6l6-6 6 6z" fill="#929595"/></svg>
<div class="abs" style="left:0;top:284px;width:449px;height:215px;overflow:hidden">
<div class="abs" style="left:0;top:0px;width:449px;height:23px;background:#3584e4"></div>
<div class="lbl" style="left:3px;top:1px;line-height:21px;height:21px;color:#fff"><span class="t cell" style="letter-spacing:0.505px">[Everything]</span></div>
<div class="trough" style="left:313px;top:1px;width:65px;background:#6ea6ec"></div><div class="clip" style="left:313px;top:1px;width:65px;height:21px"><div class="lbl num" style="right:0.5px;top:0;line-height:21px;height:21px;color:#ffffff"><span class="t num" style="letter-spacing:0.259px">0.00%</span></div></div>
<div class="trough" style="left:382px;top:1px;width:65px;background:#6ea6ec"></div><div class="clip" style="left:382px;top:1px;width:65px;height:21px"><div class="lbl num" style="right:0.5px;top:0;line-height:21px;height:21px;color:#ffffff"><span class="t num" style="letter-spacing:0.246px">100.00%</span></div></div><div class="clip" style="left:382px;top:1px;width:65px;height:21px;background:#ffffff"><div class="lbl num" style="left:0;width:65px;top:0;line-height:21px;height:21px;color:#3584e4"><span style="position:absolute;right:0.5px;top:0"><span class="t num" style="letter-spacing:0.246px">100.00%</span></span></div></div>
<div class="lbl" style="left:3px;top:24px;line-height:21px;height:21px;color:#000"><span class="t cell" style="letter-spacing:0.416px">[/usr/bin/gnome-shell]</span></div>
<div class="trough" style="left:313px;top:24px;width:65px;background:#e9eae9"></div><div class="clip" style="left:313px;top:24px;width:65px;height:21px"><div class="lbl num" style="right:0.5px;top:0;line-height:21px;height:21px;color:#000000"><span class="t num" style="letter-spacing:0.259px">1.38%</span></div></div>
<div class="trough" style="left:382px;top:24px;width:65px;background:#e9eae9"></div><div class="clip" style="left:382px;top:24px;width:65px;height:21px"><div class="lbl num" style="right:0.5px;top:0;line-height:21px;height:21px;color:#000000"><span class="t num" style="letter-spacing:0.253px">59.32%</span></div></div><div class="clip" style="left:382px;top:24px;width:38px;height:21px;background:#3584e4"><div class="lbl num" style="left:0;width:65px;top:0;line-height:21px;height:21px;color:#ffffff"><span style="position:absolute;right:0.5px;top:0"><span class="t num" style="letter-spacing:0.253px">59.32%</span></span></div></div>
<div class="lbl" style="left:3px;top:47px;line-height:21px;height:21px;color:#000"><span class="t cell" style="letter-spacing:0.334px">In file /usr/lib64/dri/swrast_dri.so</span></div>
<div class="trough" style="left:313px;top:47px;width:65px;background:#e9eae9"></div><div class="clip" style="left:313px;top:47px;width:65px;height:21px"><div class="lbl num" style="right:0.5px;top:0;line-height:21px;height:21px;color:#000000"><span class="t num" style="letter-spacing:0.253px">35.95%</span></div></div><div class="clip" style="left:313px;top:47px;width:22px;height:21px;background:#3584e4"><div class="lbl num" style="left:0;width:65px;top:0;line-height:21px;height:21px;color:#ffffff"><span style="position:absolute;right:0.5px;top:0"><span class="t num" style="letter-spacing:0.253px">35.95%</span></span></div></div>
<div class="trough" style="left:382px;top:47px;width:65px;background:#e9eae9"></div><div class="clip" style="left:382px;top:47px;width:65px;height:21px"><div class="lbl num" style="right:0.5px;top:0;line-height:21px;height:21px;color:#000000"><span class="t num" style="letter-spacing:0.253px">36.38%</span></div></div><div class="clip" style="left:382px;top:47px;width:23px;height:21px;background:#3584e4"><div class="lbl num" style="left:0;width:65px;top:0;line-height:21px;height:21px;color:#ffffff"><span style="position:absolute;right:0.5px;top:0"><span class="t num" style="letter-spacing:0.253px">36.38%</span></span></div></div>
<div class="lbl" style="left:3px;top:70px;line-height:21px;height:21px;color:#000"><span class="t cell" style="letter-spacing:0.333px">- - kernel - -</span></div>
<div class="trough" style="left:313px;top:70px;width:65px;background:#e9eae9"></div><div class="clip" style="left:313px;top:70px;width:65px;height:21px"><div class="lbl num" style="right:0.5px;top:0;line-height:21px;height:21px;color:#000000"><span class="t num" style="letter-spacing:0.259px">0.00%</span></div></div>
<div class="trough" style="left:382px;top:70px;width:65px;background:#e9eae9"></div><div class="clip" style="left:382px;top:70px;width:65px;height:21px"><div class="lbl num" style="right:0.5px;top:0;line-height:21px;height:21px;color:#000000"><span class="t num" style="letter-spacing:0.253px">33.59%</span></div></div><div class="clip" style="left:382px;top:70px;width:21px;height:21px;background:#3584e4"><div class="lbl num" style="left:0;width:65px;top:0;line-height:21px;height:21px;color:#ffffff"><span style="position:absolute;right:0.5px;top:0"><span class="t num" style="letter-spacing:0.253px">33.59%</span></span></div></div>
<div class="lbl" style="left:3px;top:93px;line-height:21px;height:21px;color:#000"><span class="t cell" style="letter-spacing:0.014px">entry_SYSCALL_64_after_hwframe</span></div>
<div class="trough" style="left:313px;top:93px;width:65px;background:#e9eae9"></div><div class="clip" style="left:313px;top:93px;width:65px;height:21px"><div class="lbl num" style="right:0.5px;top:0;line-height:21px;height:21px;color:#000000"><span class="t num" style="letter-spacing:0.259px">0.00%</span></div></div>
<div class="trough" style="left:382px;top:93px;width:65px;background:#e9eae9"></div><div class="clip" style="left:382px;top:93px;width:65px;height:21px"><div class="lbl num" style="right:0.5px;top:0;line-height:21px;height:21px;color:#000000"><span class="t num" style="letter-spacing:0.253px">30.99%</span></div></div><div class="clip" style="left:382px;top:93px;width:19px;height:21px;background:#3584e4"><div class="lbl num" style="left:0;width:65px;top:0;line-height:21px;height:21px;color:#ffffff"><span style="position:absolute;right:0.5px;top:0"><span class="t num" style="letter-spacing:0.253px">30.99%</span></span></div></div>
<div class="lbl" style="left:3px;top:116px;line-height:21px;height:21px;color:#000"><span class="t cell" style="letter-spacing:0.174px">do_syscall_64</span></div>
<div class="trough" style="left:313px;top:116px;width:65px;background:#e9eae9"></div><div class="clip" style="left:313px;top:116px;width:65px;height:21px"><div class="lbl num" style="right:0.5px;top:0;line-height:21px;height:21px;color:#000000"><span class="t num" style="letter-spacing:0.259px">0.03%</span></div></div>
<div class="trough" style="left:382px;top:116px;width:65px;background:#e9eae9"></div><div class="clip" style="left:382px;top:116px;width:65px;height:21px"><div class="lbl num" style="right:0.5px;top:0;line-height:21px;height:21px;color:#000000"><span class="t num" style="letter-spacing:0.253px">30.47%</span></div></div><div class="clip" style="left:382px;top:116px;width:19px;height:21px;background:#3584e4"><div class="lbl num" style="left:0;width:65px;top:0;line-height:21px;height:21px;color:#ffffff"><span style="position:absolute;right:0.5px;top:0"><span class="t num" style="letter-spacing:0.253px">30.47%</span></span></div></div>
<div class="lbl" style="left:3px;top:139px;line-height:21px;height:21px;color:#000"><span class="t cell" style="letter-spacing:0.335px">[/usr/bin/Xvnc :1 -auth…t 5901 -rfbwait 30000]</span></div>
<div class="trough" style="left:313px;top:139px;width:65px;background:#e9eae9"></div><div class="clip" style="left:313px;top:139px;width:65px;height:21px"><div class="lbl num" style="right:0.5px;top:0;line-height:21px;height:21px;color:#000000"><span class="t num" style="letter-spacing:0.259px">0.00%</span></div></div>
<div class="trough" style="left:382px;top:139px;width:65px;background:#e9eae9"></div><div class="clip" style="left:382px;top:139px;width:65px;height:21px"><div class="lbl num" style="right:0.5px;top:0;line-height:21px;height:21px;color:#000000"><span class="t num" style="letter-spacing:0.253px">21.34%</span></div></div><div class="clip" style="left:382px;top:139px;width:13px;height:21px;background:#3584e4"><div class="lbl num" style="left:0;width:65px;top:0;line-height:21px;height:21px;color:#ffffff"><span style="position:absolute;right:0.5px;top:0"><span class="t num" style="letter-spacing:0.253px">21.34%</span></span></div></div>
<div class="lbl" style="left:3px;top:162px;line-height:21px;height:21px;color:#000"><span class="t cell" style="letter-spacing:0.303px">__lock_text_start</span></div>
<div class="trough" style="left:313px;top:162px;width:65px;background:#e9eae9"></div><div class="clip" style="left:313px;top:162px;width:65px;height:21px"><div class="lbl num" style="right:0.5px;top:0;line-height:21px;height:21px;color:#000000"><span class="t num" style="letter-spacing:0.253px">21.27%</span></div></div><div class="clip" style="left:313px;top:162px;width:13px;height:21px;background:#3584e4"><div class="lbl num" style="left:0;width:65px;top:0;line-height:21px;height:21px;color:#ffffff"><span style="position:absolute;right:0.5px;top:0"><span class="t num" style="letter-spacing:0.253px">21.27%</span></span></div></div>
<div class="trough" style="left:382px;top:162px;width:65px;background:#e9eae9"></div><div class="clip" style="left:382px;top:162px;width:65px;height:21px"><div class="lbl num" style="right:0.5px;top:0;line-height:21px;height:21px;color:#000000"><span class="t num" style="letter-spacing:0.253px">21.31%</span></div></div><div class="clip" style="left:382px;top:162px;width:13px;height:21px;background:#3584e4"><div class="lbl num" style="left:0;width:65px;top:0;line-height:21px;height:21px;color:#ffffff"><span style="position:absolute;right:0.5px;top:0"><span class="t num" style="letter-spacing:0.253px">21.31%</span></span></div></div>
<div class="lbl" style="left:3px;top:185px;line-height:21px;height:21px;color:#000"><span class="t cell" style="letter-spacing:0.217px">sock_sendmsg</span></div>
<div class="trough" style="left:313px;top:185px;width:65px;background:#e9eae9"></div><div class="clip" style="left:313px;top:185px;width:65px;height:21px"><div class="lbl num" style="right:0.5px;top:0;line-height:21px;height:21px;color:#000000"><span class="t num" style="letter-spacing:0.259px">0.00%</span></div></div>
<div class="trough" style="left:382px;top:185px;width:65px;background:#e9eae9"></div><div class="clip" style="left:382px;top:185px;width:65px;height:21px"><div class="lbl num" style="right:0.5px;top:0;line-height:21px;height:21px;color:#000000"><span class="t num" style="letter-spacing:0.253px">16.61%</span></div></div><div class="clip" style="left:382px;top:185px;width:10px;height:21px;background:#3584e4"><div class="lbl num" style="left:0;width:65px;top:0;line-height:21px;height:21px;color:#ffffff"><span style="position:absolute;right:0.5px;top:0"><span class="t num" style="letter-spacing:0.253px">16.61%</span></span></div></div>
<div class="lbl" style="left:3px;top:208px;line-height:21px;height:21px;color:#000"><span class="t cell" style="letter-spacing:0.801px">exit</span></div>
<div class="trough" style="left:313px;top:208px;width:65px;background:#e9eae9"></div><div class="clip" style="left:313px;top:208px;width:65px;height:21px"><div class="lbl num" style="right:0.5px;top:0;line-height:21px;height:21px;color:#000000"><span class="t num" style="letter-spacing:0.259px">0.00%</span></div></div>
<div class="trough" style="left:382px;top:208px;width:65px;background:#e9eae9"></div><div class="clip" style="left:382px;top:208px;width:65px;height:21px"><div class="lbl num" style="right:0.5px;top:0;line-height:21px;height:21px;color:#000000"><span class="t num" style="letter-spacing:0.253px">14.98%</span></div></div><div class="clip" style="left:382px;top:208px;width:9px;height:21px;background:#3584e4"><div class="lbl num" style="left:0;width:65px;top:0;line-height:21px;height:21px;color:#ffffff"><span style="position:absolute;right:0.5px;top:0"><span class="t num" style="letter-spacing:0.253px">14.98%</span></span></div></div>
</div>
<div class="abs" style="left:0;top:499px;width:449px;height:240px;background:#fff"></div>
<div class="hline" style="left:0;top:499px;width:449px"></div>
<div class="hline" style="left:0;top:524px;width:449px"></div>
<div class="abs" style="left:0;top:500px;width:449px;height:24px;overflow:hidden">
<div class="vline" style="left:357px;top:0;height:24px"></div>
<div class="vline" style="left:400px;top:0;height:24px"></div>
<div class="lbl hdr" style="left:5px;top:1px"><span class="t hdr" style="letter-spacing:0.616px">Callers</span></div>
<div class="lbl hdr" style="left:364px;top:1px"><span class="t hdr" style="letter-spacing:0.809px">Self</span></div>
<div class="lbl hdr" style="left:407px;top:1px"><span class="t hdr" style="letter-spacing:0.844px">Total</span></div>
<svg class="abs" style="left:446px;top:9px" width="12" height="6"><path d="M0 6l6-6 6 6z" fill="#929595"/></svg>
</div>
<div class="abs" style="left:0;top:284px;width:1023px;height:455px;overflow:hidden;pointer-events:none">
<svg class="abs" style="left:454px;top:9px" width="12" height="7"><path d="M0.5 0h11l-5.5 6.5z" fill="#4a4e4e"/></svg>
<div class="lbl" style="left:472px;top:1px;line-height:21px;height:21px"><span class="t cell" style="letter-spacing:0.505px">[Everything]</span></div>
<div class="trough" style="left:845px;top:1px;width:65px;background:#e9eae9"></div><div class="clip" style="left:845px;top:1px;width:65px;height:21px"><div class="lbl num" style="right:0.5px;top:0;line-height:21px;height:21px;color:#000000"><span class="t num" style="letter-spacing:0.259px">0.00%</span></div></div>
<div class="trough" style="left:914px;top:1px;width:65px;background:#e9eae9"></div><div class="clip" style="left:914px;top:1px;width:65px;height:21px"><div class="lbl num" style="right:0.5px;top:0;line-height:21px;height:21px;color:#000000"><span class="t num" style="letter-spacing:0.246px">100.00%</span></div></div><div class="clip" style="left:914px;top:1px;width:65px;height:21px;background:#3584e4"><div class="lbl num" style="left:0;width:65px;top:0;line-height:21px;height:21px;color:#ffffff"><span style="position:absolute;right:0.5px;top:0"><span class="t num" style="letter-spacing:0.246px">100.00%</span></span></div></div>
<div class="lbl num" style="left:981px;width:38px;top:1px;line-height:21px;height:21px"><span class="t num" style="letter-spacing:0.211px">3046</span></div>
<svg class="abs" style="left:475px;top:29px" width="7" height="12"><path d="M0 0.5v11l6.5-5.5z" fill="#4a4e4e"/></svg>
<div class="lbl" style="left:490px;top:24px;line-height:21px;height:21px"><span class="t cell" style="letter-spacing:0.416px">[/usr/bin/gnome-shell]</span></div>
<div class="trough" style="left:845px;top:24px;width:65px;background:#e9eae9"></div><div class="clip" style="left:845px;top:24px;width:65px;height:21px"><div class="lbl num" style="right:0.5px;top:0;line-height:21px;height:21px;color:#000000"><span class="t num" style="letter-spacing:0.259px">1.38%</span></div></div>
<div class="trough" style="left:914px;top:24px;width:65px;background:#e9eae9"></div><div class="clip" style="left:914px;top:24px;width:65px;height:21px"><div class="lbl num" style="right:0.5px;top:0;line-height:21px;height:21px;color:#000000"><span class="t num" style="letter-spacing:0.253px">59.32%</span></div></div><div class="clip" style="left:914px;top:24px;width:38px;height:21px;background:#3584e4"><div class="lbl num" style="left:0;width:65px;top:0;line-height:21px;height:21px;color:#ffffff"><span style="position:absolute;right:0.5px;top:0"><span class="t num" style="letter-spacing:0.253px">59.32%</span></span></div></div>
<div class="lbl num" style="left:981px;width:38px;top:24px;line-height:21px;height:21px"><span class="t num" style="letter-spacing:0.211px">1807</span></div>
<svg class="abs" style="left:475px;top:52px" width="7" height="12"><path d="M0 0.5v11l6.5-5.5z" fill="#4a4e4e"/></svg>
<div class="lbl" style="left:490px;top:47px;line-height:21px;height:21px"><span class="t cell" style="letter-spacing:0.319px">[/usr/bin/Xvnc :1 -auth /h…port 5901 -rfbwait 30000]</span></div>
<div class="trough" style="left:845px;top:47px;width:65px;background:#e9eae9"></div><div class="clip" style="left:845px;top:47px;width:65px;height:21px"><div class="lbl num" style="right:0.5px;top:0;line-height:21px;height:21px;color:#000000"><span class="t num" style="letter-spacing:0.259px">0.00%</span></div></div>
<div class="trough" style="left:914px;top:47px;width:65px;background:#e9eae9"></div><div class="clip" style="left:914px;top:47px;width:65px;height:21px"><div class="lbl num" style="right:0.5px;top:0;line-height:21px;height:21px;color:#000000"><span class="t num" style="letter-spacing:0.253px">21.34%</span></div></div><div class="clip" style="left:914px;top:47px;width:13px;height:21px;background:#3584e4"><div class="lbl num" style="left:0;width:65px;top:0;line-height:21px;height:21px;color:#ffffff"><span style="position:absolute;right:0.5px;top:0"><span class="t num" style="letter-spacing:0.253px">21.34%</span></span></div></div>
<div class="lbl num" style="left:981px;width:38px;top:47px;line-height:21px;height:21px"><span class="t num" style="letter-spacing:0.214px">650</span></div>
<svg class="abs" style="left:475px;top:75px" width="7" height="12"><path d="M0 0.5v11l6.5-5.5z" fill="#4a4e4e"/></svg>
<div class="lbl" style="left:490px;top:70px;line-height:21px;height:21px"><span class="t cell" style="letter-spacing:0.566px">[sysprof]</span></div>
<div class="trough" style="left:845px;top:70px;width:65px;background:#e9eae9"></div><div class="clip" style="left:845px;top:70px;width:65px;height:21px"><div class="lbl num" style="right:0.5px;top:0;line-height:21px;height:21px;color:#000000"><span class="t num" style="letter-spacing:0.259px">0.00%</span></div></div>
<div class="trough" style="left:914px;top:70px;width:65px;background:#e9eae9"></div><div class="clip" style="left:914px;top:70px;width:65px;height:21px"><div class="lbl num" style="right:0.5px;top:0;line-height:21px;height:21px;color:#000000"><span class="t num" style="letter-spacing:0.253px">10.34%</span></div></div><div class="clip" style="left:914px;top:70px;width:6px;height:21px;background:#3584e4"><div class="lbl num" style="left:0;width:65px;top:0;line-height:21px;height:21px;color:#ffffff"><span style="position:absolute;right:0.5px;top:0"><span class="t num" style="letter-spacing:0.253px">10.34%</span></span></div></div>
<div class="lbl num" style="left:981px;width:38px;top:70px;line-height:21px;height:21px"><span class="t num" style="letter-spacing:0.214px">315</span></div>
<svg class="abs" style="left:475px;top:98px" width="7" height="12"><path d="M0 0.5v11l6.5-5.5z" fill="#4a4e4e"/></svg>
<div class="lbl" style="left:490px;top:93px;line-height:21px;height:21px"><span class="t cell" style="letter-spacing:0.386px">[/usr/libexec/dleyna-renderer-service]</span></div>
<div class="trough" style="left:845px;top:93px;width:65px;background:#e9eae9"></div><div class="clip" style="left:845px;top:93px;width:65px;height:21px"><div class="lbl num" style="right:0.5px;top:0;line-height:21px;height:21px;color:#000000"><span class="t num" style="letter-spacing:0.259px">0.00%</span></div></div>
<div class="trough" style="left:914px;top:93px;width:65px;background:#e9eae9"></div><div class="clip" style="left:914px;top:93px;width:65px;height:21px"><div class="lbl num" style="right:0.5px;top:0;line-height:21px;height:21px;color:#000000"><span class="t num" style="letter-spacing:0.259px">4.79%</span></div></div><div class="clip" style="left:914px;top:93px;width:2px;height:21px;background:#3584e4"><div class="lbl num" style="left:0;width:65px;top:0;line-height:21px;height:21px;color:#ffffff"><span style="position:absolute;right:0.5px;top:0"><span class="t num" style="letter-spacing:0.259px">4.79%</span></span></div></div>
<div class="lbl num" style="left:981px;width:38px;top:93px;line-height:21px;height:21px"><span class="t num" style="letter-spacing:0.214px">146</span></div>
<svg class="abs" style="left:475px;top:121px" width="7" height="12"><path d="M0 0.5v11l6.5-5.5z" fill="#4a4e4e"/></svg>
<div class="lbl" style="left:490px;top:116px;line-height:21px;height:21px"><span class="t cell" style="letter-spacing:0.526px">['avahi-daemon: running [linux.local]']</span></div>
<div class="trough" style="left:845px;top:116px;width:65px;background:#e9eae9"></div><div class="clip" style="left:845px;top:116px;width:65px;height:21px"><div class="lbl num" style="right:0.5px;top:0;line-height:21px;height:21px;color:#000000"><span class="t num" style="letter-spacing:0.259px">0.00%</span></div></div>
<div class="trough" style="left:914px;top:116px;width:65px;background:#e9eae9"></div><div class="clip" style="left:914px;top:116px;width:65px;height:21px"><div class="lbl num" style="right:0.5px;top:0;line-height:21px;height:21px;color:#000000"><span class="t num" style="letter-spacing:0.259px">0.62%</span></div></div>
<div class="lbl num" style="left:981px;width:38px;top:116px;line-height:21px;height:21px"><span class="t num" style="letter-spacing:0.211px">19</span></div>
<svg class="abs" style="left:475px;top:144px" width="7" height="12"><path d="M0 0.5v11l6.5-5.5z" fill="#4a4e4e"/></svg>
<div class="lbl" style="left:490px;top:139px;line-height:21px;height:21px"><span class="t cell" style="letter-spacing:0.497px">[kworker/2:0-events]</span></div>
<div class="trough" style="left:845px;top:139px;width:65px;background:#e9eae9"></div><div class="clip" style="left:845px;top:139px;width:65px;height:21px"><div class="lbl num" style="right:0.5px;top:0;line-height:21px;height:21px;color:#000000"><span class="t num" style="letter-spacing:0.259px">0.00%</span></div></div>
<div class="trough" style="left:914px;top:139px;width:65px;background:#e9eae9"></div><div class="clip" style="left:914px;top:139px;width:65px;height:21px"><div class="lbl num" style="right:0.5px;top:0;line-height:21px;height:21px;color:#000000"><span class="t num" style="letter-spacing:0.259px">0.53%</span></div></div>
<div class="lbl num" style="left:981px;width:38px;top:139px;line-height:21px;height:21px"><span class="t num" style="letter-spacing:0.211px">16</span></div>
<svg class="abs" style="left:475px;top:167px" width="7" height="12"><path d="M0 0.5v11l6.5-5.5z" fill="#4a4e4e"/></svg>
<div class="lbl" style="left:490px;top:162px;line-height:21px;height:21px"><span class="t cell" style="letter-spacing:0.494px">[pkla-check-auth]</span></div>
<div class="trough" style="left:845px;top:162px;width:65px;background:#e9eae9"></div><div class="clip" style="left:845px;top:162px;width:65px;height:21px"><div class="lbl num" style="right:0.5px;top:0;line-height:21px;height:21px;color:#000000"><span class="t num" style="letter-spacing:0.259px">0.00%</span></div></div>
<div class="trough" style="left:914px;top:162px;width:65px;background:#e9eae9"></div><div class="clip" style="left:914px;top:162px;width:65px;height:21px"><div class="lbl num" style="right:0.5px;top:0;line-height:21px;height:21px;color:#000000"><span class="t num" style="letter-spacing:0.259px">0.36%</span></div></div>
<div class="lbl num" style="left:981px;width:38px;top:162px;line-height:21px;height:21px"><span class="t num" style="letter-spacing:0.727px">11</span></div>
<svg class="abs" style="left:475px;top:190px" width="7" height="12"><path d="M0 0.5v11l6.5-5.5z" fill="#4a4e4e"/></svg>
<div class="lbl" style="left:490px;top:185px;line-height:21px;height:21px"><span class="t cell" style="letter-spacing:0.377px">[/usr/libexec/Xorg vt7 -dis…y -novtswitch -verbose 3]</span></div>
<div class="trough" style="left:845px;top:185px;width:65px;background:#e9eae9"></div><div class="clip" style="left:845px;top:185px;width:65px;height:21px"><div class="lbl num" style="right:0.5px;top:0;line-height:21px;height:21px;color:#000000"><span class="t num" style="letter-spacing:0.259px">0.00%</span></div></div>
<div class="trough" style="left:914px;top:185px;width:65px;background:#e9eae9"></div><div class="clip" style="left:914px;top:185px;width:65px;height:21px"><div class="lbl num" style="right:0.5px;top:0;line-height:21px;height:21px;color:#000000"><span class="t num" style="letter-spacing:0.259px">0.36%</span></div></div>
<div class="lbl num" style="left:981px;width:38px;top:185px;line-height:21px;height:21px"><span class="t num" style="letter-spacing:0.727px">11</span></div>
<svg class="abs" style="left:475px;top:213px" width="7" height="12"><path d="M0 0.5v11l6.5-5.5z" fill="#4a4e4e"/></svg>
<div class="lbl" style="left:490px;top:208px;line-height:21px;height:21px"><span class="t cell" style="letter-spacing:0.453px">[/usr/lib/polkit-1/polkitd --no-debug]</span></div>
<div class="trough" style="left:845px;top:208px;width:65px;background:#e9eae9"></div><div class="clip" style="left:845px;top:208px;width:65px;height:21px"><div class="lbl num" style="right:0.5px;top:0;line-height:21px;height:21px;color:#000000"><span class="t num" style="letter-spacing:0.259px">0.00%</span></div></div>
<div class="trough" style="left:914px;top:208px;width:65px;background:#e9eae9"></div><div class="clip" style="left:914px;top:208px;width:65px;height:21px"><div class="lbl num" style="right:0.5px;top:0;line-height:21px;height:21px;color:#000000"><span class="t num" style="letter-spacing:0.259px">0.33%</span></div></div>
<div class="lbl num" style="left:981px;width:38px;top:208px;line-height:21px;height:21px"><span class="t num" style="letter-spacing:0.211px">10</span></div>
<svg class="abs" style="left:475px;top:236px" width="7" height="12"><path d="M0 0.5v11l6.5-5.5z" fill="#4a4e4e"/></svg>
<div class="lbl" style="left:490px;top:231px;line-height:21px;height:21px"><span class="t cell" style="letter-spacing:0.418px">[/usr/libexec/sysprofd]</span></div>
<div class="trough" style="left:845px;top:231px;width:65px;background:#e9eae9"></div><div class="clip" style="left:845px;top:231px;width:65px;height:21px"><div class="lbl num" style="right:0.5px;top:0;line-height:21px;height:21px;color:#000000"><span class="t num" style="letter-spacing:0.259px">0.00%</span></div></div>
<div class="trough" style="left:914px;top:231px;width:65px;background:#e9eae9"></div><div class="clip" style="left:914px;top:231px;width:65px;height:21px"><div class="lbl num" style="right:0.5px;top:0;line-height:21px;height:21px;color:#000000"><span class="t num" style="letter-spacing:0.259px">0.33%</span></div></div>
<div class="lbl num" style="left:981px;width:38px;top:231px;line-height:21px;height:21px"><span class="t num" style="letter-spacing:0.211px">10</span></div>
<svg class="abs" style="left:475px;top:259px" width="7" height="12"><path d="M0 0.5v11l6.5-5.5z" fill="#4a4e4e"/></svg>
<div class="lbl" style="left:490px;top:254px;line-height:21px;height:21px"><span class="t cell" style="letter-spacing:0.370px">[kworker/1:0-rcu_gp]</span></div>
<div class="trough" style="left:845px;top:254px;width:65px;background:#e9eae9"></div><div class="clip" style="left:845px;top:254px;width:65px;height:21px"><div class="lbl num" style="right:0.5px;top:0;line-height:21px;height:21px;color:#000000"><span class="t num" style="letter-spacing:0.259px">0.00%</span></div></div>
<div class="trough" style="left:914px;top:254px;width:65px;background:#e9eae9"></div><div class="clip" style="left:914px;top:254px;width:65px;height:21px"><div class="lbl num" style="right:0.5px;top:0;line-height:21px;height:21px;color:#000000"><span class="t num" style="letter-spacing:0.259px">0.30%</span></div></div>
<div class="lbl num" style="left:981px;width:38px;top:254px;line-height:21px;height:21px"><span class="t num" style="letter-spacing:0.203px">9</span></div>
<svg class="abs" style="left:475px;top:282px" width="7" height="12"><path d="M0 0.5v11l6.5-5.5z" fill="#4a4e4e"/></svg>
<div class="lbl" style="left:490px;top:277px;line-height:21px;height:21px"><span class="t cell" style="letter-spacing:0.376px">[/usr/bin/dbus-daemon --s…-activation --syslog-only]</span></div>
<div class="trough" style="left:845px;top:277px;width:65px;background:#e9eae9"></div><div class="clip" style="left:845px;top:277px;width:65px;height:21px"><div class="lbl num" style="right:0.5px;top:0;line-height:21px;height:21px;color:#000000"><span class="t num" style="letter-spacing:0.259px">0.00%</span></div></div>
<div class="trough" style="left:914px;top:277px;width:65px;background:#e9eae9"></div><div class="clip" style="left:914px;top:277px;width:65px;height:21px"><div class="lbl num" style="right:0.5px;top:0;line-height:21px;height:21px;color:#000000"><span class="t num" style="letter-spacing:0.259px">0.23%</span></div></div>
<div class="lbl num" style="left:981px;width:38px;top:277px;line-height:21px;height:21px"><span class="t num" style="letter-spacing:0.203px">7</span></div>
<svg class="abs" style="left:475px;top:305px" width="7" height="12"><path d="M0 0.5v11l6.5-5.5z" fill="#4a4e4e"/></svg>
<div class="lbl" style="left:490px;top:300px;line-height:21px;height:21px"><span class="t cell" style="letter-spacing:0.587px">[ksoftirqd/3]</span></div>
<div class="trough" style="left:845px;top:300px;width:65px;background:#e9eae9"></div><div class="clip" style="left:845px;top:300px;width:65px;height:21px"><div class="lbl num" style="right:0.5px;top:0;line-height:21px;height:21px;color:#000000"><span class="t num" style="letter-spacing:0.259px">0.00%</span></div></div>
<div class="trough" style="left:914px;top:300px;width:65px;background:#e9eae9"></div><div class="clip" style="left:914px;top:300px;width:65px;height:21px"><div class="lbl num" style="right:0.5px;top:0;line-height:21px;height:21px;color:#000000"><span class="t num" style="letter-spacing:0.259px">0.23%</span></div></div>
<div class="lbl num" style="left:981px;width:38px;top:300px;line-height:21px;height:21px"><span class="t num" style="letter-spacing:0.203px">7</span></div>
<svg class="abs" style="left:475px;top:328px" width="7" height="12"><path d="M0 0.5v11l6.5-5.5z" fill="#4a4e4e"/></svg>
<div class="lbl" style="left:490px;top:323px;line-height:21px;height:21px"><span class="t cell" style="letter-spacing:0.239px">[rcu_sched]</span></div>
<div class="trough" style="left:845px;top:323px;width:65px;background:#e9eae9"></div><div class="clip" style="left:845px;top:323px;width:65px;height:21px"><div class="lbl num" style="right:0.5px;top:0;line-height:21px;height:21px;color:#000000"><span class="t num" style="letter-spacing:0.259px">0.00%</span></div></div>
<div class="trough" style="left:914px;top:323px;width:65px;background:#e9eae9"></div><div class="clip" style="left:914px;top:323px;width:65px;height:21px"><div class="lbl num" style="right:0.5px;top:0;line-height:21px;height:21px;color:#000000"><span class="t num" style="letter-spacing:0.259px">0.20%</span></div></div>
<div class="lbl num" style="left:981px;width:38px;top:323px;line-height:21px;height:21px"><span class="t num" style="letter-spacing:0.203px">6</span></div>
<svg class="abs" style="left:475px;top:351px" width="7" height="12"><path d="M0 0.5v11l6.5-5.5z" fill="#4a4e4e"/></svg>
<div class="lbl" style="left:490px;top:346px;line-height:21px;height:21px"><span class="t cell" style="letter-spacing:0.394px">[/usr/bin/gnome-clocks --gapplication-service]</span></div>
<div class="trough" style="left:845px;top:346px;width:65px;background:#e9eae9"></div><div class="clip" style="left:845px;top:346px;width:65px;height:21px"><div class="lbl num" style="right:0.5px;top:0;line-height:21px;height:21px;color:#000000"><span class="t num" style="letter-spacing:0.259px">0.00%</span></div></div>
<div class="trough" style="left:914px;top:346px;width:65px;background:#e9eae9"></div><div class="clip" style="left:914px;top:346px;width:65px;height:21px"><div class="lbl num" style="right:0.5px;top:0;line-height:21px;height:21px;color:#000000"><span class="t num" style="letter-spacing:0.259px">0.16%</span></div></div>
<div class="lbl num" style="left:981px;width:38px;top:346px;line-height:21px;height:21px"><span class="t num" style="letter-spacing:0.203px">5</span></div>
<svg class="abs" style="left:475px;top:374px" width="7" height="12"><path d="M0 0.5v11l6.5-5.5z" fill="#4a4e4e"/></svg>
<div class="lbl" style="left:490px;top:369px;line-height:21px;height:21px"><span class="t cell" style="letter-spacing:0.482px">[kworker/1:1H-kblockd]</span></div>
<div class="trough" style="left:845px;top:369px;width:65px;background:#e9eae9"></div><div class="clip" style="left:845px;top:369px;width:65px;height:21px"><div class="lbl num" style="right:0.5px;top:0;line-height:21px;height:21px;color:#000000"><span class="t num" style="letter-spacing:0.259px">0.00%</span></div></div>
<div class="trough" style="left:914px;top:369px;width:65px;background:#e9eae9"></div><div class="clip" style="left:914px;top:369px;width:65px;height:21px"><div class="lbl num" style="right:0.5px;top:0;line-height:21px;height:21px;color:#000000"><span class="t num" style="letter-spacing:0.259px">0.10%</span></div></div>
<div class="lbl num" style="left:981px;width:38px;top:369px;line-height:21px;height:21px"><span class="t num" style="letter-spacing:0.203px">3</span></div>
<svg class="abs" style="left:475px;top:397px" width="7" height="12"><path d="M0 0.5v11l6.5-5.5z" fill="#4a4e4e"/></svg>
<div class="lbl" style="left:490px;top:392px;line-height:21px;height:21px"><span class="t cell" style="letter-spacing:0.419px">[/usr/lib/systemd/systemd…-system --deserialize 16]</span></div>
<div class="trough" style="left:845px;top:392px;width:65px;background:#e9eae9"></div><div class="clip" style="left:845px;top:392px;width:65px;height:21px"><div class="lbl num" style="right:0.5px;top:0;line-height:21px;height:21px;color:#000000"><span class="t num" style="letter-spacing:0.259px">0.00%</span></div></div>
<div class="trough" style="left:914px;top:392px;width:65px;background:#e9eae9"></div><div class="clip" style="left:914px;top:392px;width:65px;height:21px"><div class="lbl num" style="right:0.5px;top:0;line-height:21px;height:21px;color:#000000"><span class="t num" style="letter-spacing:0.259px">0.07%</span></div></div>
<div class="lbl num" style="left:981px;width:38px;top:392px;line-height:21px;height:21px"><span class="t num" style="letter-spacing:0.203px">2</span></div>
<svg class="abs" style="left:475px;top:420px" width="7" height="12"><path d="M0 0.5v11l6.5-5.5z" fill="#4a4e4e"/></svg>
<div class="lbl" style="left:490px;top:415px;line-height:21px;height:21px"><span class="t cell" style="letter-spacing:0.496px">[kworker/0:2-ata_sff]</span></div>
<div class="trough" style="left:845px;top:415px;width:65px;background:#e9eae9"></div><div class="clip" style="left:845px;top:415px;width:65px;height:21px"><div class="lbl num" style="right:0.5px;top:0;line-height:21px;height:21px;color:#000000"><span class="t num" style="letter-spacing:0.259px">0.00%</span></div></div>
<div class="trough" style="left:914px;top:415px;width:65px;background:#e9eae9"></div><div class="clip" style="left:914px;top:415px;width:65px;height:21px"><div class="lbl num" style="right:0.5px;top:0;line-height:21px;height:21px;color:#000000"><span class="t num" style="letter-spacing:0.259px">0.03%</span></div></div>
<div class="lbl num" style="left:981px;width:38px;top:415px;line-height:21px;height:21px"><span class="t num" style="letter-spacing:0.203px">1</span></div>
<svg class="abs" style="left:475px;top:443px" width="7" height="12"><path d="M0 0.5v11l6.5-5.5z" fill="#4a4e4e"/></svg>
<div class="lbl" style="left:490px;top:438px;line-height:21px;height:21px"><span class="t cell" style="letter-spacing:0.474px">[/usr/lib/systemd/systemd-machined]</span></div>
<div class="trough" style="left:845px;top:438px;width:65px;background:#e9eae9"></div><div class="clip" style="left:845px;top:438px;width:65px;height:21px"><div class="lbl num" style="right:0.5px;top:0;line-height:21px;height:21px;color:#000000"><span class="t num" style="letter-spacing:0.259px">0.00%</span></div></div>
<div class="trough" style="left:914px;top:438px;width:65px;background:#e9eae9"></div><div class="clip" style="left:914px;top:438px;width:65px;height:21px"><div class="lbl num" style="right:0.5px;top:0;line-height:21px;height:21px;color:#000000"><span class="t num" style="letter-spacing:0.259px">0.03%</span></div></div>
<div class="lbl num" style="left:981px;width:38px;top:438px;line-height:21px;height:21px"><span class="t num" style="letter-spacing:0.203px">1</span></div>
</div>
</body></html>
